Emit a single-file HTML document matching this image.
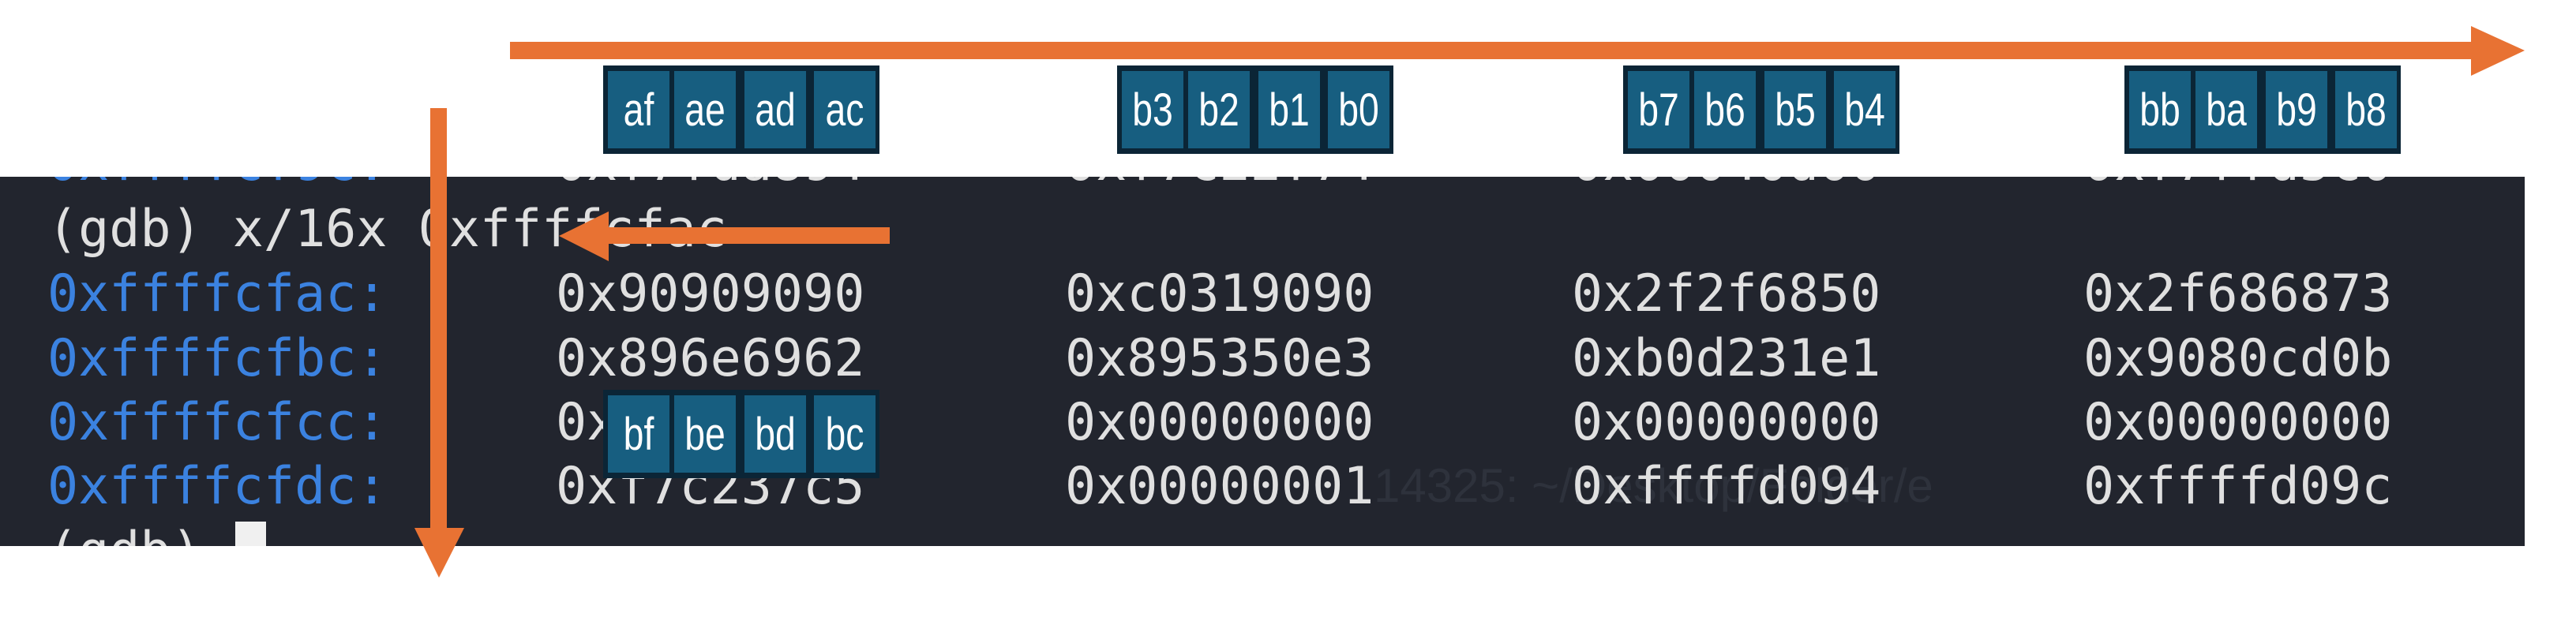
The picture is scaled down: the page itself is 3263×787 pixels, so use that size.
<!DOCTYPE html>
<html><head><meta charset="utf-8"><style>
html,body{margin:0;padding:0;background:#fff;}
svg{display:block}
</style></head><body>
<svg width="3263" height="787" viewBox="0 0 3263 787" xmlns="http://www.w3.org/2000/svg">
<rect width="3263" height="787" fill="#fff"/>
<rect x="0" y="224" width="3198" height="468" fill="#22252e"/>
<g font-family="'DejaVu Sans Mono','Liberation Mono',monospace" font-size="65">
<clipPath id="c"><rect x="0" y="224" width="3198" height="468"/></clipPath>
<g clip-path="url(#c)">
<text x="1740" y="636" fill="#2e323c" font-family="'Liberation Sans',sans-serif" font-size="60">14325: ~/Desktop/Folder/e</text>
<text x="60" y="228" fill="#3b82e0">0xffffcf9c:</text>
<text x="704" y="228" fill="#e0e0e0">0xf7fda894</text>
<text x="1349" y="228" fill="#e0e0e0">0xf7c22f74</text>
<text x="1991" y="228" fill="#e0e0e0">0x00040d00</text>
<text x="2639" y="228" fill="#e0e0e0">0xf7ffd5c0</text>
<text x="60" y="312" fill="#e0e0e0">(gdb) x/16x 0xffffcfac</text>
<text x="60" y="394" fill="#3b82e0">0xffffcfac:</text>
<text x="704" y="394" fill="#e0e0e0">0x90909090</text>
<text x="1349" y="394" fill="#e0e0e0">0xc0319090</text>
<text x="1991" y="394" fill="#e0e0e0">0x2f2f6850</text>
<text x="2639" y="394" fill="#e0e0e0">0x2f686873</text>
<text x="60" y="476" fill="#3b82e0">0xffffcfbc:</text>
<text x="704" y="476" fill="#e0e0e0">0x896e6962</text>
<text x="1349" y="476" fill="#e0e0e0">0x895350e3</text>
<text x="1991" y="476" fill="#e0e0e0">0xb0d231e1</text>
<text x="2639" y="476" fill="#e0e0e0">0x9080cd0b</text>
<text x="60" y="557" fill="#3b82e0">0xffffcfcc:</text>
<text x="704" y="557" fill="#e0e0e0">0x00000000</text>
<text x="1349" y="557" fill="#e0e0e0">0x00000000</text>
<text x="1991" y="557" fill="#e0e0e0">0x00000000</text>
<text x="2639" y="557" fill="#e0e0e0">0x00000000</text>
<text x="60" y="638" fill="#3b82e0">0xffffcfdc:</text>
<text x="704" y="638" fill="#e0e0e0">0xf7c237c5</text>
<text x="1349" y="638" fill="#e0e0e0">0x00000001</text>
<text x="1991" y="638" fill="#e0e0e0">0xffffd094</text>
<text x="2639" y="638" fill="#e0e0e0">0xffffd09c</text>
<text x="60" y="720" fill="#e0e0e0">(gdb)</text>
<rect x="298" y="661" width="39" height="50" fill="#f0f0f0"/>
</g>
</g>
<g fill="#e87233">
<rect x="646" y="53" width="2490" height="22"/>
<polygon points="3130,33 3198,64 3130,96"/>
<rect x="545" y="137" width="21" height="535"/>
<polygon points="525,669 588,669 556,732"/>
<rect x="769" y="288" width="358" height="21"/>
<polygon points="708,299 771,268 771,331"/>
</g>
<g font-family="'Liberation Sans',sans-serif" font-size="58" text-anchor="middle">
<g transform="translate(764,83)">
<rect width="350" height="112" fill="#0b2536"/>
<rect x="6" y="7" width="78" height="98" fill="#175e80"/><rect x="90" y="7" width="78" height="98" fill="#175e80"/><rect x="179" y="7" width="78" height="98" fill="#175e80"/><rect x="267" y="7" width="78" height="98" fill="#175e80"/>
<g fill="#fff"><text transform="translate(45,76) scale(0.8,1)">af</text><text transform="translate(129,76) scale(0.8,1)">ae</text><text transform="translate(218,76) scale(0.8,1)">ad</text><text transform="translate(306,76) scale(0.8,1)">ac</text></g>
</g>
<g transform="translate(1415,83)">
<rect width="350" height="112" fill="#0b2536"/>
<rect x="6" y="7" width="78" height="98" fill="#175e80"/><rect x="90" y="7" width="78" height="98" fill="#175e80"/><rect x="179" y="7" width="78" height="98" fill="#175e80"/><rect x="267" y="7" width="78" height="98" fill="#175e80"/>
<g fill="#fff"><text transform="translate(45,76) scale(0.8,1)">b3</text><text transform="translate(129,76) scale(0.8,1)">b2</text><text transform="translate(218,76) scale(0.8,1)">b1</text><text transform="translate(306,76) scale(0.8,1)">b0</text></g>
</g>
<g transform="translate(2056,83)">
<rect width="350" height="112" fill="#0b2536"/>
<rect x="6" y="7" width="78" height="98" fill="#175e80"/><rect x="90" y="7" width="78" height="98" fill="#175e80"/><rect x="179" y="7" width="78" height="98" fill="#175e80"/><rect x="267" y="7" width="78" height="98" fill="#175e80"/>
<g fill="#fff"><text transform="translate(45,76) scale(0.8,1)">b7</text><text transform="translate(129,76) scale(0.8,1)">b6</text><text transform="translate(218,76) scale(0.8,1)">b5</text><text transform="translate(306,76) scale(0.8,1)">b4</text></g>
</g>
<g transform="translate(2691,83)">
<rect width="350" height="112" fill="#0b2536"/>
<rect x="6" y="7" width="78" height="98" fill="#175e80"/><rect x="90" y="7" width="78" height="98" fill="#175e80"/><rect x="179" y="7" width="78" height="98" fill="#175e80"/><rect x="267" y="7" width="78" height="98" fill="#175e80"/>
<g fill="#fff"><text transform="translate(45,76) scale(0.8,1)">bb</text><text transform="translate(129,76) scale(0.8,1)">ba</text><text transform="translate(218,76) scale(0.8,1)">b9</text><text transform="translate(306,76) scale(0.8,1)">b8</text></g>
</g>
<g transform="translate(764,494)">
<rect width="350" height="112" fill="#0b2536"/>
<rect x="6" y="7" width="78" height="98" fill="#175e80"/><rect x="90" y="7" width="78" height="98" fill="#175e80"/><rect x="179" y="7" width="78" height="98" fill="#175e80"/><rect x="267" y="7" width="78" height="98" fill="#175e80"/>
<g fill="#fff"><text transform="translate(45,76) scale(0.8,1)">bf</text><text transform="translate(129,76) scale(0.8,1)">be</text><text transform="translate(218,76) scale(0.8,1)">bd</text><text transform="translate(306,76) scale(0.8,1)">bc</text></g>
</g>
</g>
</svg>
</body></html>
